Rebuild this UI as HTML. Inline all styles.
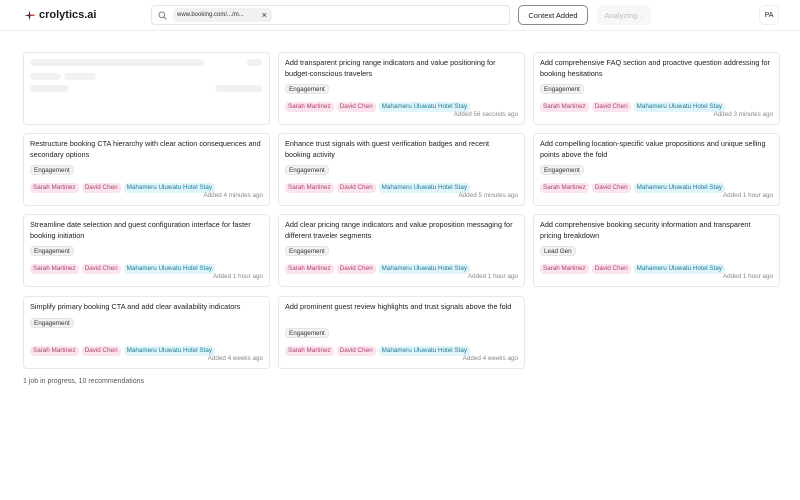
<!DOCTYPE html>
<html><head><meta charset="utf-8"><style>
*{box-sizing:border-box;margin:0;padding:0}
body{width:800px;height:500px;background:#fff;font-family:"Liberation Sans",sans-serif;color:#222;position:relative;overflow:hidden}
.hdr{position:absolute;left:0;top:0;width:800px;height:31px;border-bottom:1px solid #eee}
.logo{position:absolute;left:39px;top:9px;font-size:11px;font-weight:bold;color:#1a1a1a}
.search{position:absolute;left:151px;top:5px;width:359px;height:20px;border:1px solid #e6e6e6;border-radius:4px}
.chip{position:absolute;left:21px;top:2px;width:99px;height:14px;background:#f1f1f1;border-radius:4px;font-size:6px;line-height:15px;padding-left:4px;color:#333}
.chip span{position:absolute;right:5px;top:0;font-size:9px;color:#333}
.btn{position:absolute;top:5px;height:20px;border-radius:5px;font-size:7.5px;display:flex;align-items:center;justify-content:center}
.card{position:absolute;width:247px;height:73px;border:1px solid #e8e8e8;border-radius:4px;background:#fff}
.t{position:absolute;left:6px;top:5px;right:8px;font-size:7.3px;line-height:10.5px;color:#222}
.tag{display:inline-block;height:10px;line-height:10px;font-size:6.3px;padding:0 3px;border-radius:4px;margin-right:3px}
.eng{position:absolute;left:6px;background:#f2f2f2;color:#333;border:0.5px solid #e4e4e4}
.names{position:absolute;left:6px;top:42px}
.p{background:#fbe4ee;color:#b0406c}
.c{background:#dff4fb;color:#1f7a93}
.f{position:absolute;right:6px;top:58px;font-size:6.3px;color:#888}
.sk{position:absolute;background:#f1f1f1;border-radius:4px}
</style></head><body>
<div class="hdr">
<svg style="position:absolute;left:24px;top:10px" width="11" height="11" viewBox="0 0 11 11"><path d="M5.5 0.5 L6.3 4.6 L10.5 5.2 L6.3 6.2 L5.5 10.5 L4.7 6.2 L0.5 5.5 L4.7 4.6Z" fill="#1e2a5a"/><rect x="5.5" y="4.6" width="5" height="1.3" fill="#e0382b"/></svg>
<div class="logo">crolytics.ai</div>
<div class="search">
<svg style="position:absolute;left:6px;top:5px" width="9" height="9" viewBox="0 0 9 9"><circle cx="3.8" cy="3.8" r="2.8" fill="none" stroke="#777" stroke-width="0.9"/><path d="M6 6 L8.3 8.3" stroke="#777" stroke-width="0.9"/></svg>
<div class="chip">www.booking.com/.../m...<span>×</span></div>
</div>
<div class="btn" style="left:518px;width:70px;border:1px solid #888;color:#222">Context Added</div>
<div class="btn" style="left:597px;width:54px;background:#f7f7f7;color:#bbb">Analyzing...</div>
<div class="btn" style="left:759px;width:20px;border:1px solid #eee;color:#222;font-size:7px">PA</div>
</div>

<div class="card" style="left:23px;top:52px">
<div class="sk" style="left:6px;top:6px;width:174px;height:7px"></div>
<div class="sk" style="left:223px;top:6px;width:15px;height:7px"></div>
<div class="sk" style="left:6px;top:20px;width:31px;height:7px"></div>
<div class="sk" style="left:40px;top:20px;width:32px;height:7px"></div>
<div class="sk" style="left:6px;top:32px;width:39px;height:7px"></div>
<div class="sk" style="left:191px;top:32px;width:47px;height:7px"></div>
</div>

<div class="card" style="left:278px;top:52px"><div class="t">Add transparent pricing range indicators and value positioning for budget-conscious travelers</div><span class="tag eng" style="top:31px">Engagement</span><div class="names"><span class="tag p">Sarah Martinez</span><span class="tag p">David Chen</span><span class="tag c">Mahameru Uluwatu Hotel Stay</span></div><div class="f">Added 56 seconds ago</div></div>
<div class="card" style="left:533px;top:52px"><div class="t">Add comprehensive FAQ section and proactive question addressing for booking hesitations</div><span class="tag eng" style="top:31px">Engagement</span><div class="names"><span class="tag p">Sarah Martinez</span><span class="tag p">David Chen</span><span class="tag c">Mahameru Uluwatu Hotel Stay</span></div><div class="f">Added 3 minutes ago</div></div>

<div class="card" style="left:23px;top:133px"><div class="t">Restructure booking CTA hierarchy with clear action consequences and secondary options</div><span class="tag eng" style="top:31px">Engagement</span><div class="names"><span class="tag p">Sarah Martinez</span><span class="tag p">David Chen</span><span class="tag c">Mahameru Uluwatu Hotel Stay</span></div><div class="f">Added 4 minutes ago</div></div>
<div class="card" style="left:278px;top:133px"><div class="t">Enhance trust signals with guest verification badges and recent booking activity</div><span class="tag eng" style="top:31px">Engagement</span><div class="names"><span class="tag p">Sarah Martinez</span><span class="tag p">David Chen</span><span class="tag c">Mahameru Uluwatu Hotel Stay</span></div><div class="f">Added 5 minutes ago</div></div>
<div class="card" style="left:533px;top:133px"><div class="t">Add compelling location-specific value propositions and unique selling points above the fold</div><span class="tag eng" style="top:31px">Engagement</span><div class="names"><span class="tag p">Sarah Martinez</span><span class="tag p">David Chen</span><span class="tag c">Mahameru Uluwatu Hotel Stay</span></div><div class="f">Added 1 hour ago</div></div>

<div class="card" style="left:23px;top:214px"><div class="t">Streamline date selection and guest configuration interface for faster booking initiation</div><span class="tag eng" style="top:31px">Engagement</span><div class="names"><span class="tag p">Sarah Martinez</span><span class="tag p">David Chen</span><span class="tag c">Mahameru Uluwatu Hotel Stay</span></div><div class="f">Added 1 hour ago</div></div>
<div class="card" style="left:278px;top:214px"><div class="t">Add clear pricing range indicators and value proposition messaging for different traveler segments</div><span class="tag eng" style="top:31px">Engagement</span><div class="names"><span class="tag p">Sarah Martinez</span><span class="tag p">David Chen</span><span class="tag c">Mahameru Uluwatu Hotel Stay</span></div><div class="f">Added 1 hour ago</div></div>
<div class="card" style="left:533px;top:214px"><div class="t">Add comprehensive booking security information and transparent pricing breakdown</div><span class="tag eng" style="top:31px">Lead Gen</span><div class="names"><span class="tag p">Sarah Martinez</span><span class="tag p">David Chen</span><span class="tag c">Mahameru Uluwatu Hotel Stay</span></div><div class="f">Added 1 hour ago</div></div>

<div class="card" style="left:23px;top:296px"><div class="t">Simplify primary booking CTA and add clear availability indicators</div><span class="tag eng" style="top:21px">Engagement</span><div class="names"><span class="tag p">Sarah Martinez</span><span class="tag p">David Chen</span><span class="tag c">Mahameru Uluwatu Hotel Stay</span></div><div class="f">Added 4 weeks ago</div></div>
<div class="card" style="left:278px;top:296px"><div class="t">Add prominent guest review highlights and trust signals above the fold</div><span class="tag eng" style="top:31px">Engagement</span><div class="names"><span class="tag p">Sarah Martinez</span><span class="tag p">David Chen</span><span class="tag c">Mahameru Uluwatu Hotel Stay</span></div><div class="f">Added 4 weeks ago</div></div>

<div style="position:absolute;left:23px;top:378px;font-size:7px;color:#555">1 job in progress, 10 recommendations</div>
</body></html>
